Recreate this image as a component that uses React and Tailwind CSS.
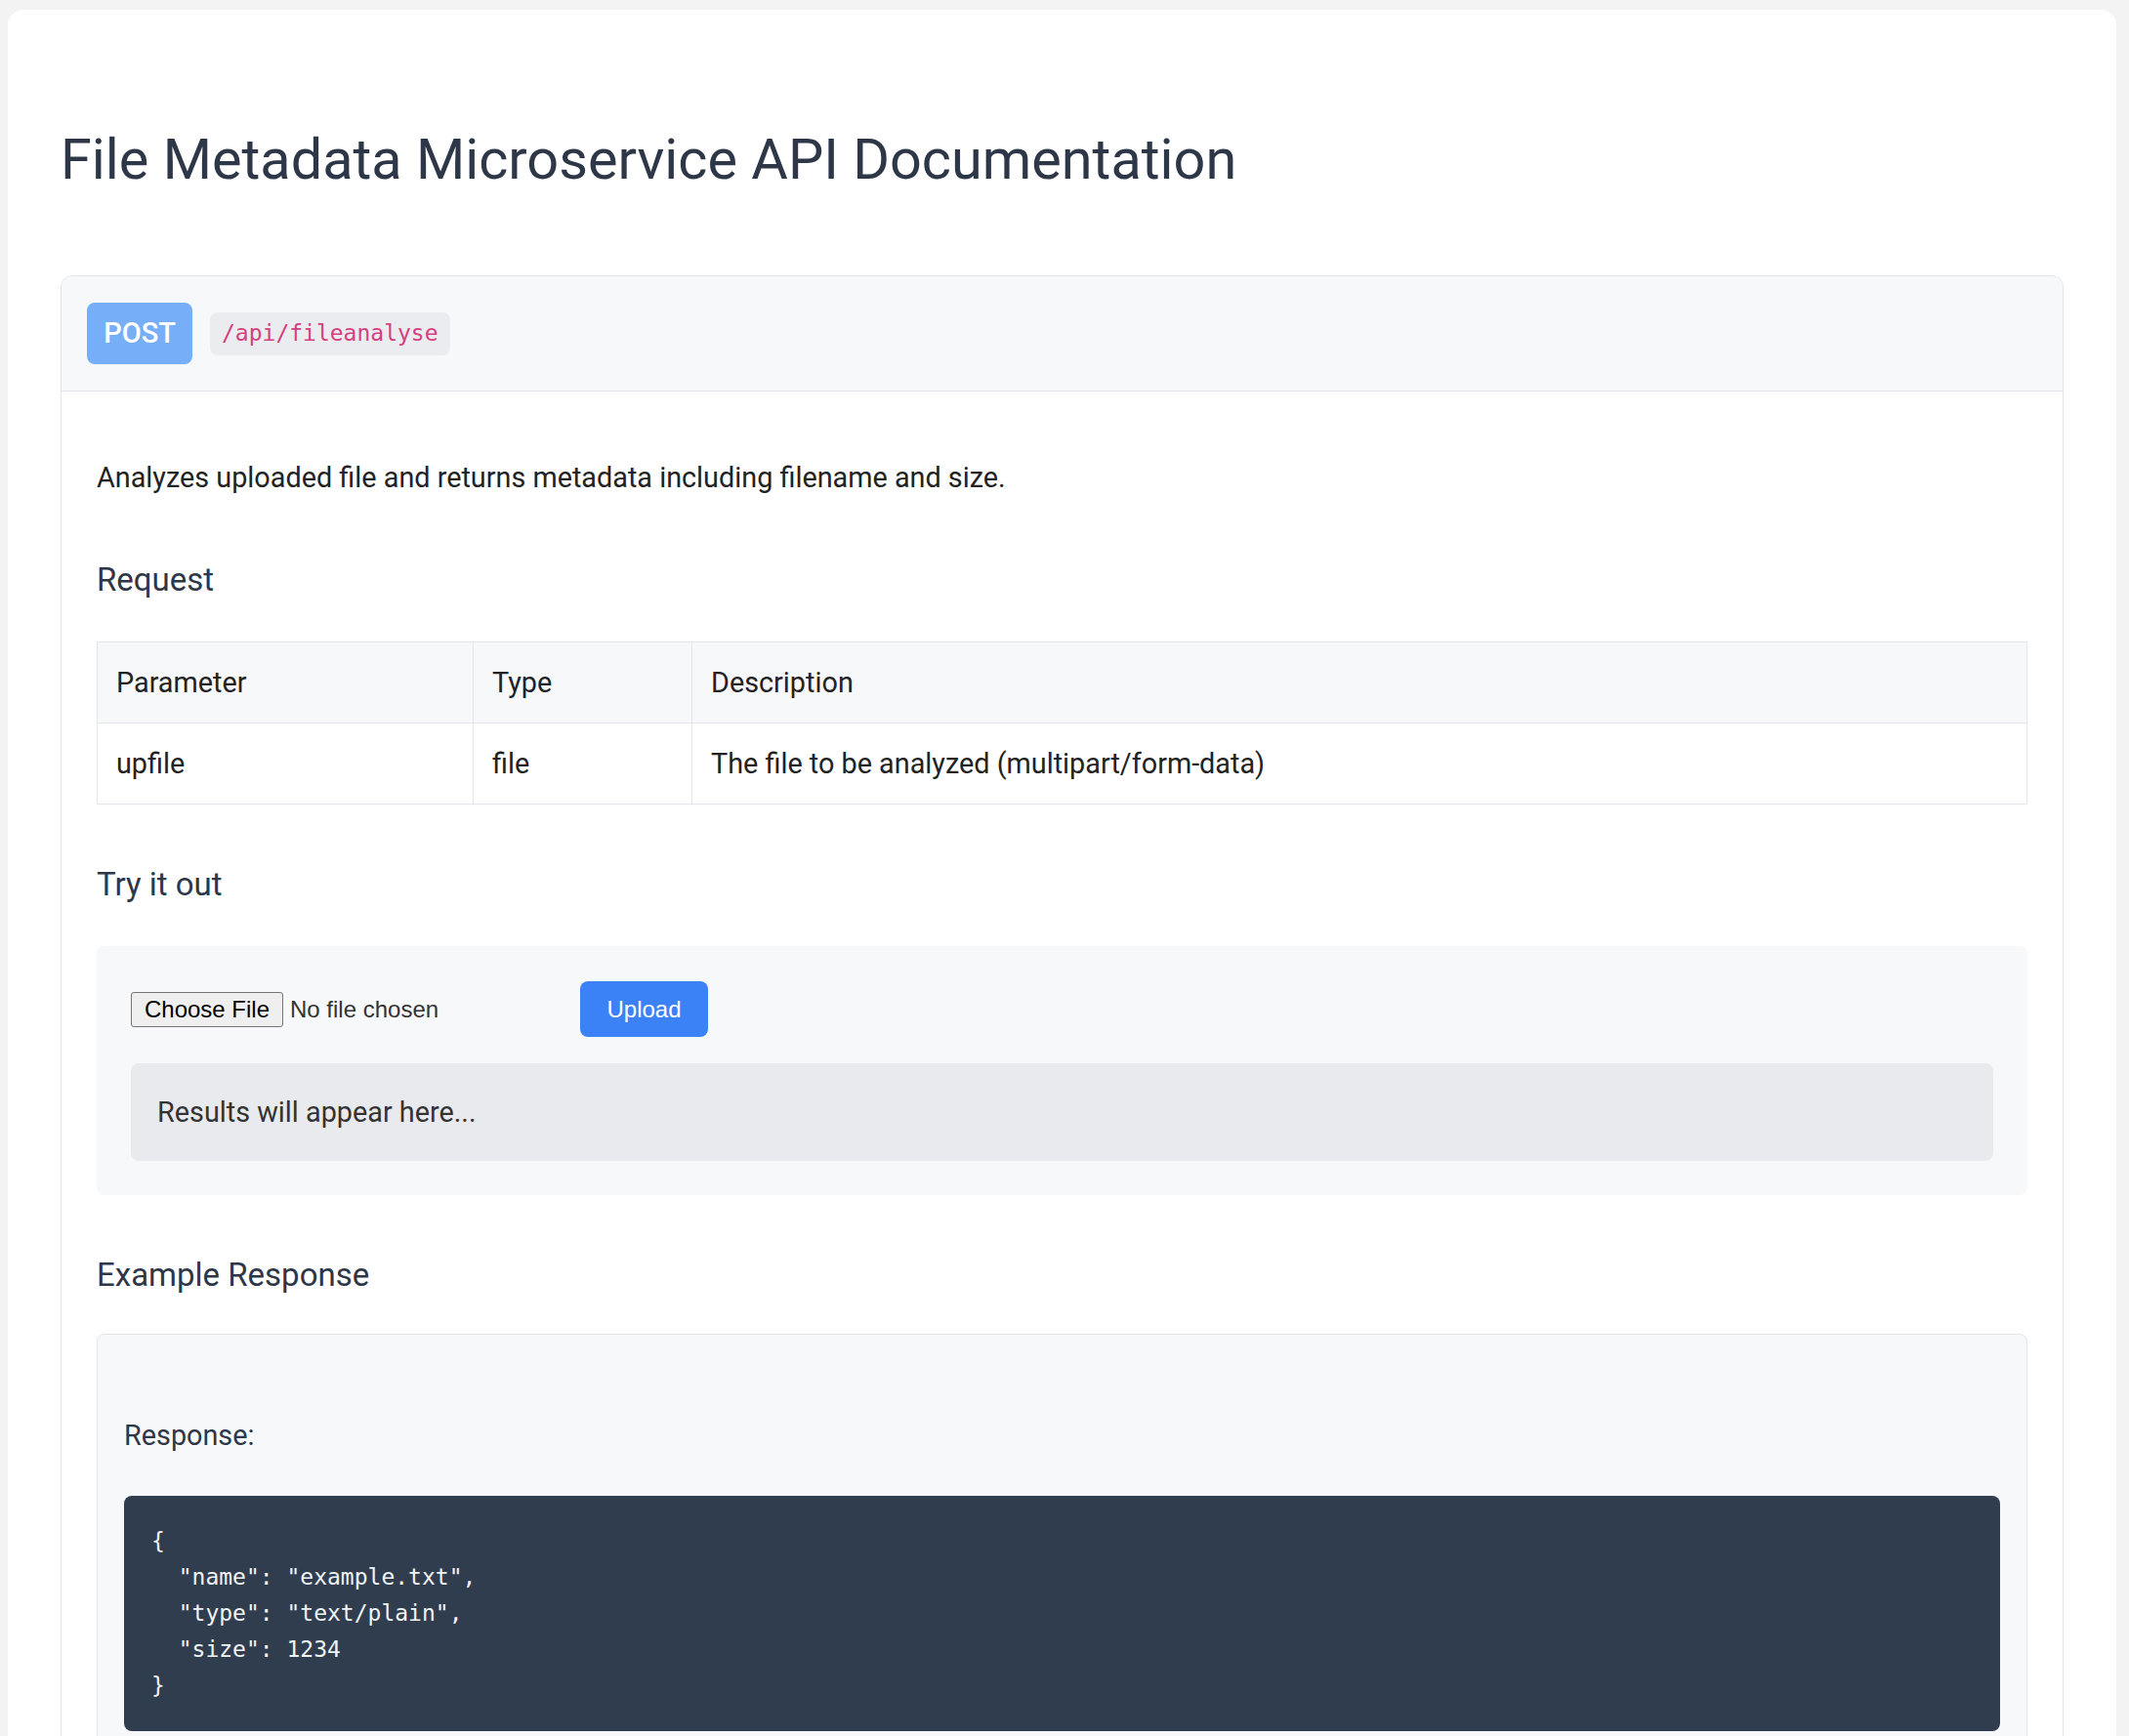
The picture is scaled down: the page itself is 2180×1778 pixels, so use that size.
export default function App() {
  const sans = { fontFamily: 'Roboto, "Noto Sans", sans-serif' };
  return (
    <div className="min-h-screen bg-[#f3f3f3] pt-[10px] pl-[8px] pr-[13px]" style={sans}>
      <div className="bg-white rounded-t-[16px] px-[54px] pt-[120px] pb-[60px]">
        <h1 className="text-[57.6px] leading-[68px] font-normal text-[#2d3748] m-0">
          File Metadata Microservice API Documentation
        </h1>

        <div className="mt-[84px] border border-[#e1e4e8] rounded-[12px]">
          <div className="bg-[#f7f8fa] rounded-t-[12px] border-b border-[#e1e4e8] px-[26px] py-[27px] flex items-center gap-[18px]">
            <span className="h-[63px] w-[108px] flex items-center justify-center bg-[#76aff8] text-white text-[29px] font-medium rounded-[8px]">
              POST
            </span>
            <code
              className="h-[44px] px-[12px] flex items-center bg-[#ebecef] text-[#d6407f] text-[23px] rounded-[8px]"
              style={{ fontFamily: '"DejaVu Sans Mono", monospace' }}
            >
              /api/fileanalyse
            </code>
          </div>

          <div className="px-[36px] pt-[67px] pb-[40px]">
            <p className="text-[28.8px] leading-[42px] text-[#222]">
              Analyzes uploaded file and returns metadata including filename and size.
            </p>

            <h3 className="mt-[66px] text-[33px] leading-[36px] font-normal text-[#2d3748]">Request</h3>

            <table className="mt-[45px] w-full border-collapse text-[28.8px] leading-[42px] text-[#222]">
              <thead>
                <tr className="bg-[#f7f8fa]">
                  <th className="w-[385px] border border-[#e2e5e9] px-[19px] py-[20px] text-left font-normal">Parameter</th>
                  <th className="w-[224px] border border-[#e2e5e9] px-[19px] py-[20px] text-left font-normal">Type</th>
                  <th className="border border-[#e2e5e9] px-[19px] py-[20px] text-left font-normal">Description</th>
                </tr>
              </thead>
              <tbody>
                <tr>
                  <td className="border border-[#e2e5e9] px-[19px] py-[20px]">upfile</td>
                  <td className="border border-[#e2e5e9] px-[19px] py-[20px]">file</td>
                  <td className="border border-[#e2e5e9] px-[19px] py-[20px]">The file to be analyzed (multipart/form-data)</td>
                </tr>
              </tbody>
            </table>

            <h3 className="mt-[64px] text-[33px] leading-[36px] font-normal text-[#2d3748]">Try it out</h3>

            <div className="mt-[45px] bg-[#f7f8fa] rounded-[8px] px-[35px] pt-[36px] pb-[35px]">
              <div className="flex items-center">
                <div className="w-[460px] flex items-center gap-[7px]" style={{ fontFamily: '"Liberation Sans", Arial, sans-serif' }}>
                  <span className="h-[36px] w-[156px] flex items-center justify-center bg-[#efefef] border border-[#767676] rounded-[3px] text-[24px] text-black">
                    Choose File
                  </span>
                  <span className="text-[24px] text-[#333]">No file chosen</span>
                </div>
                <button
                  className="h-[57px] w-[131px] bg-[#3b82f6] text-white text-[24px] rounded-[8px] flex items-center justify-center"
                  style={{ fontFamily: '"Liberation Sans", Arial, sans-serif' }}
                >
                  Upload
                </button>
              </div>
              <div className="mt-[27px] bg-[#e9eaee] rounded-[8px] px-[27px] py-[29px] text-[28.8px] leading-[42px] text-[#333]">
                Results will appear here...
              </div>
            </div>

            <h3 className="mt-[64px] text-[33px] leading-[36px] font-normal text-[#2d3748]">Example Response</h3>

            <div className="mt-[42px] bg-[#f7f8fa] border border-[#e1e4e8] rounded-[8px] px-[27px] pt-[82px] pb-[28px]">
              <p className="text-[28.8px] leading-[42px] text-[#2d3748]">Response:</p>
              <pre
                className="mt-[41px] bg-[#303d4f] text-[#f1f3f6] rounded-[8px] px-[28px] py-[28px] text-[23px] leading-[37px]"
                style={{ fontFamily: '"DejaVu Sans Mono", monospace' }}
              >
{`{
  "name": "example.txt",
  "type": "text/plain",
  "size": 1234
}`}
              </pre>
            </div>
          </div>
        </div>
      </div>
    </div>
  );
}
